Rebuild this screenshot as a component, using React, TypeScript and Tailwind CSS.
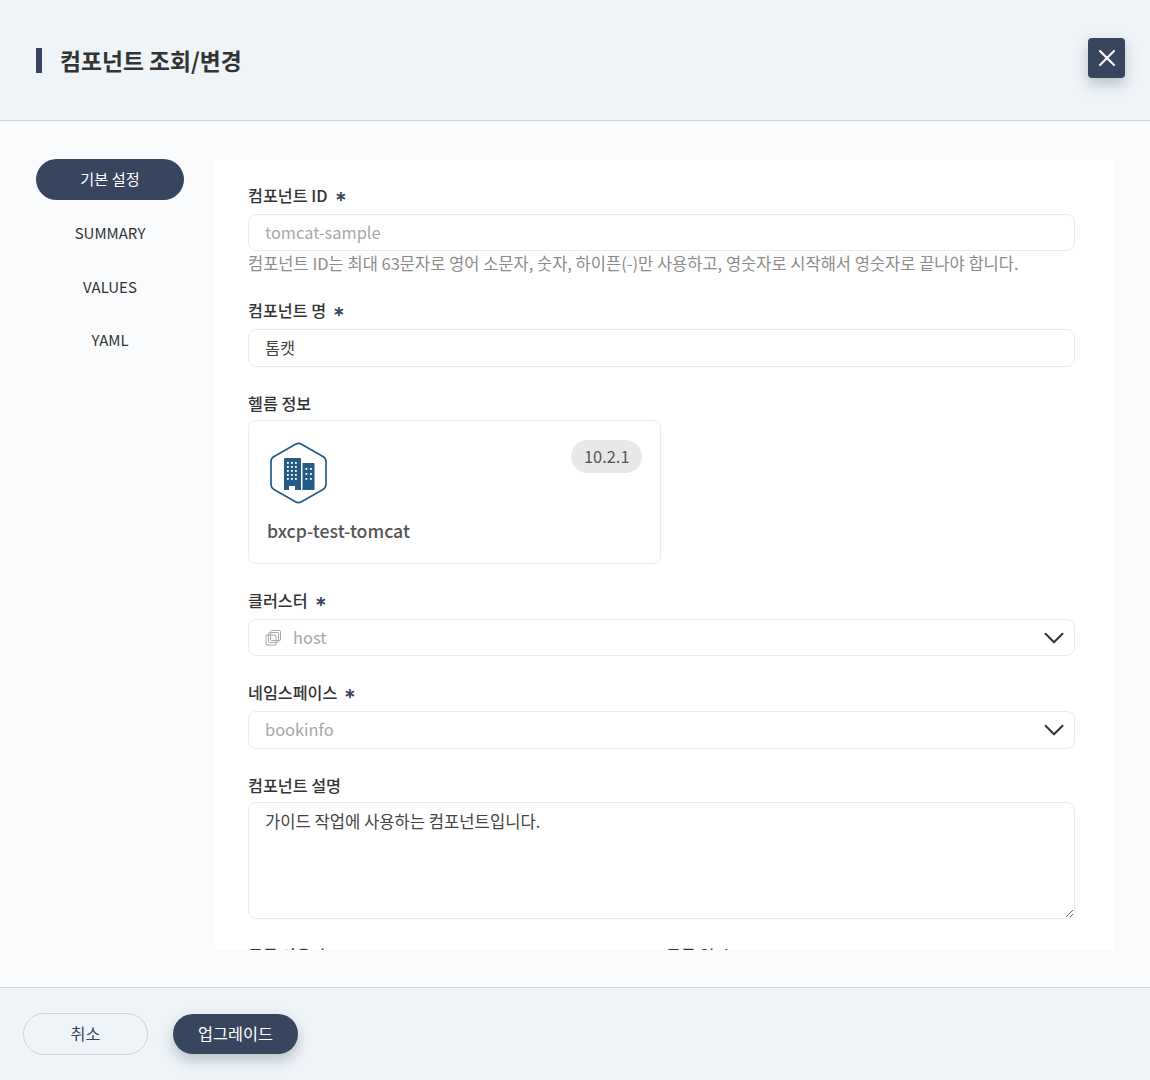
import React from "react";
import { X, ChevronDown } from "lucide-react";

function Label({ children, req }: { children: React.ReactNode; req?: boolean }) {
  return (
    <div className="flex items-center h-[24px] text-[16.2px] font-medium text-[#333333] leading-[24px]">
      <span>{children}</span>
      {req && <span className="ml-[7px] text-[#38455f] text-[14px] font-bold">∗</span>}
    </div>
  );
}

function Building() {
  return (
    <svg width="62" height="64" viewBox="0 0 62 64" fill="none">
      <path d="M26.500 3.200a6 6 0 0 1 6 0l21.500 12.300a6 6 0 0 1 3 5.200v22.600a6 6 0 0 1-3 5.200L32.500 60.800a6 6 0 0 1-6 0L5 48.500a6 6 0 0 1-3-5.200V20.700a6 6 0 0 1 3-5.200z" stroke="#255c86" strokeWidth="1.700" />
      <path fill="#255c86" d="M15 18a1 1 0 0 1 1-1h15a1 1 0 0 1 1 1v31h-6v-4h-6v4h-5z" />
      <path fill="#255c86" d="M33.500 22h11a1 1 0 0 1 1 1v26h-12z" />
      <g fill="#ffffff">
        {[21, 25, 29, 33, 37].map((y) =>
          [18, 22, 26].map((x) => <rect key={`${x}-${y}`} x={x} y={y} width="1.800" height="1.800" />)
        )}
        {[27, 32, 37].map((y) =>
          [36.500, 41].map((x) => <rect key={`${x}-${y}`} x={x} y={y} width="1.800" height="1.800" />)
        )}
      </g>
    </svg>
  );
}

function ClusterIcon() {
  return (
    <svg width="17" height="17" viewBox="0 0 17 17" fill="none" stroke="#a8a8a8" strokeWidth="1">
      <rect x="5.500" y="1.500" width="10" height="10" rx="1" />
      <rect x="3.500" y="3.500" width="10" height="10" rx="1" />
      <rect x="1" y="6" width="10" height="10" rx="1" />
    </svg>
  );
}

function Chevron() {
  return <ChevronDown size={34} color="#333333" strokeWidth={1.4} className="shrink-0" />;
}

function Nav({ children, active }: { children: React.ReactNode; active?: boolean }) {
  return (
    <div
      className={
        active
          ? "h-[41px] pb-[2px] rounded-full bg-[#38455f] text-white flex items-center justify-center text-[15.2px]"
          : "h-[41px] mt-[13px] flex items-center justify-center text-[15px] text-[#333333]"
      }
    >
      {children}
    </div>
  );
}

export default function App() {
  return (
    <div
      className="w-[1150px] h-[1080px] flex flex-col bg-[#fafbfd] overflow-hidden"
      style={{ fontFamily: '"Noto Sans CJK KR", "Noto Sans", sans-serif' }}
    >
      <header className="h-[121px] shrink-0 bg-[#eff4f8] border-b border-[#cfd5e0] flex items-center justify-between pl-[36px] pr-[25px]">
        <div className="flex items-center">
          <div className="w-[6px] h-[25px] bg-[#38455f]" />
          <h1 className="ml-[18px] pt-[2px] text-[22.8px] font-bold text-[#333333] leading-[32px]">컴포넌트 조회/변경</h1>
        </div>
        <button className="w-[37px] h-[40px] mb-[5px] rounded-[4px] bg-[#38455f] flex items-center justify-center shadow-[0_6px_14px_rgba(56,69,95,0.3)]">
          <X size={28} color="#ffffff" strokeWidth={1.8} />
        </button>
      </header>

      <main className="flex-1 flex pt-[38px] pl-[36px] pr-[36px] pb-[37px] min-h-0">
        <nav className="w-[148px] shrink-0">
          <Nav active>기본 설정</Nav>
          <Nav>SUMMARY</Nav>
          <Nav>VALUES</Nav>
          <div className="h-[41px] mt-[12px] flex items-center justify-center text-[15px] text-[#333333]">YAML</div>
        </nav>
        <section className="ml-[31px] flex-1 bg-white overflow-hidden pl-[33px] pr-[39px] pt-[24px]">
          <Label req>컴포넌트 ID</Label>
          <div className="mt-[7px] h-[37px] rounded-[8px] border border-[#ebebeb] flex items-center px-[16px] text-[16.4px] text-[#a8a8a8]">tomcat-sample</div>
          <div className="text-[16.5px] leading-[24px] h-[24px] text-[#8c8c8c]">컴포넌트 ID는 최대 63문자로 영어 소문자, 숫자, 하이픈(-)만 사용하고, 영숫자로 시작해서 영숫자로 끝나야 합니다.</div>

          <div className="mt-[23px]"><Label req>컴포넌트 명</Label></div>
          <div className="mt-[7px] h-[38px] pb-[1px] rounded-[8px] border border-[#ebebeb] flex items-center px-[16px] text-[16.4px] text-[#444444]">톰캣</div>

          <div className="mt-[24px]"><Label>헬름 정보</Label></div>
          <div className="mt-[5px] w-[413px] h-[144px] rounded-[8px] border border-[#ebebeb] pl-[18px] pr-[18px] pt-[19px]">
            <div className="flex justify-between items-start">
              <div className="ml-[2px] mt-[1px] h-[64px]"><Building /></div>
              <span className="h-[33px] pb-[1px] px-[12.5px] rounded-full bg-[#e8e8e8] flex items-center text-[16.4px] text-[#555555]">10.2.1</span>
            </div>
            <div className="mt-[11px] text-[17.7px] font-medium leading-[28px] text-[#555555]">bxcp-test-tomcat</div>
          </div>

          <div className="mt-[24px]"><Label req>클러스터</Label></div>
          <div className="mt-[7px] h-[37px] rounded-[8px] border border-[#ebebeb] flex items-center pl-[16px] pr-[3px] text-[16.4px] text-[#a8a8a8]">
            <ClusterIcon />
            <span className="ml-[11px] flex-1">host</span>
            <Chevron />
          </div>

          <div className="mt-[24px]"><Label req>네임스페이스</Label></div>
          <div className="mt-[7px] h-[38px] rounded-[8px] border border-[#ebebeb] flex items-center pl-[16px] pr-[3px] text-[16.4px] text-[#a8a8a8]">
            <span className="flex-1 pb-[2px]">bookinfo</span>
            <Chevron />
          </div>

          <div className="mt-[24px]"><Label>컴포넌트 설명</Label></div>
          <textarea
            readOnly
            defaultValue="가이드 작업에 사용하는 컴포넌트입니다."
            className="block mt-[5px] w-full h-[117px] rounded-[8px] border border-[#ebebeb] px-[16px] py-[6px] text-[16.6px] leading-[24px] text-[#444444] outline-none"
          />

          <div className="mt-[24px] grid grid-cols-[418px_1fr]">
            <Label>등록 사용자</Label>
            <Label>등록 일시</Label>
          </div>
        </section>
      </main>

      <footer className="h-[93px] shrink-0 bg-[#eff4f8] border-t border-[#d2d5da] flex items-center pl-[23px] pb-[1px]">
        <button className="w-[125px] h-[42px] rounded-full border border-[#cdd1d8] text-[16.3px] text-[#38455f] flex items-center justify-center">취소</button>
        <button className="ml-[25px] w-[125px] h-[40px] rounded-full bg-[#38455f] text-[16.3px] text-white flex items-center justify-center shadow-[0_6px_14px_rgba(56,69,95,0.3)]">업그레이드</button>
      </footer>
    </div>
  );
}
